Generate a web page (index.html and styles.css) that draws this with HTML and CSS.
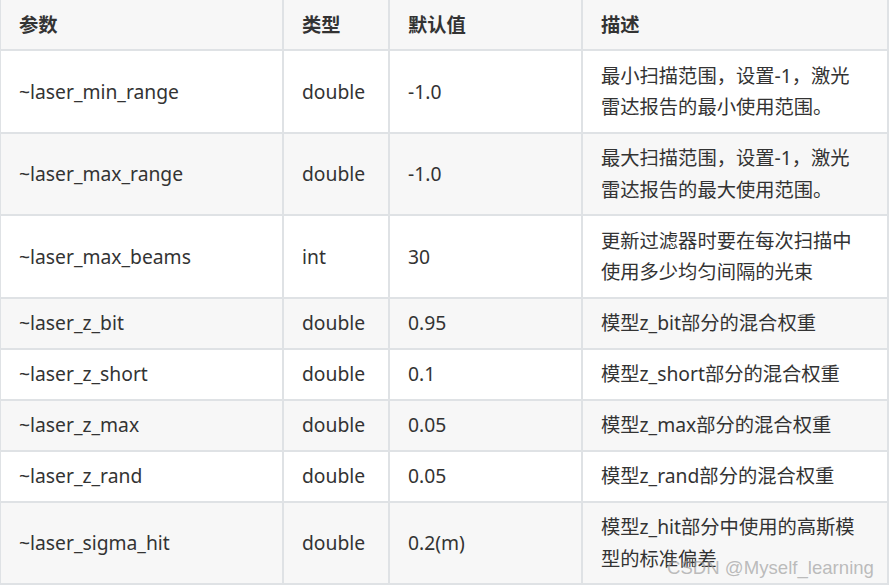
FILE: index.html
```html
<!DOCTYPE html>
<html lang="zh-CN">
<head>
<meta charset="utf-8">
<link rel="stylesheet" href="styles.css">
</head>
<body>
<div class="page">
<table class="params">
<colgroup>
<col class="c1"><col class="c2"><col class="c3"><col class="c4">
</colgroup>
<thead>
<tr><th>参数</th><th>类型</th><th>默认值</th><th>描述</th></tr>
</thead>
<tbody>
<tr><td>~laser_min_range</td><td>double</td><td>-1.0</td><td>最小扫描范围，设置-1，激光雷达报告的最小使用范围。</td></tr>
<tr><td>~laser_max_range</td><td>double</td><td>-1.0</td><td>最大扫描范围，设置-1，激光雷达报告的最大使用范围。</td></tr>
<tr><td>~laser_max_beams</td><td>int</td><td>30</td><td>更新过滤器时要在每次扫描中使用多少均匀间隔的光束</td></tr>
<tr><td>~laser_z_bit</td><td>double</td><td>0.95</td><td>模型z_bit部分的混合权重</td></tr>
<tr><td>~laser_z_short</td><td>double</td><td>0.1</td><td>模型z_short部分的混合权重</td></tr>
<tr><td>~laser_z_max</td><td>double</td><td>0.05</td><td>模型z_max部分的混合权重</td></tr>
<tr><td>~laser_z_rand</td><td>double</td><td>0.05</td><td>模型z_rand部分的混合权重</td></tr>
<tr><td>~laser_sigma_hit</td><td>double</td><td>0.2(m)</td><td>模型z_hit部分中使用的高斯模型的标准偏差</td></tr>
</tbody>
</table>
<div class="watermark">CSDN @Myself_learning</div>
</div>
</body>
</html>
```
FILE: styles.css
```css
html, body {
  margin: 0;
  padding: 0;
  background: #ffffff;
}
.page {
  position: relative;
  width: 890px;
  height: 587px;
  overflow: hidden;
}
.params {
  border-collapse: collapse;
  table-layout: fixed;
  width: 890px;
  margin: -2px 0 0 -1px;
  font-family: "Noto Sans", "Noto Sans CJK SC", sans-serif;
  font-size: 19.3px;
  line-height: 31.5px;
  color: #333333;
}
.c1 { width: 283px; }
.c2 { width: 106px; }
.c3 { width: 193px; }
.c4 { width: 306px; }
.params th, .params td {
  border: 2px solid #dfe2e5;
  padding: 8.75px 18px;
  text-align: left;
  vertical-align: middle;
}
.params td:last-child {
  padding-right: 24px;
}
.params th {
  font-weight: 700;
  font-family: "Noto Sans CJK SC", "Noto Sans", sans-serif;
}
.params thead tr { background: #f7f7f7; }
.params tbody tr:nth-child(2n) { background: #f7f7f7; }
.watermark {
  position: absolute;
  left: 667px;
  top: 556px;
  font-family: "Liberation Sans", Arial, sans-serif;
  font-size: 18.6px;
  line-height: 24px;
  color: rgba(160, 160, 160, 0.7);
  white-space: nowrap;
}
```
